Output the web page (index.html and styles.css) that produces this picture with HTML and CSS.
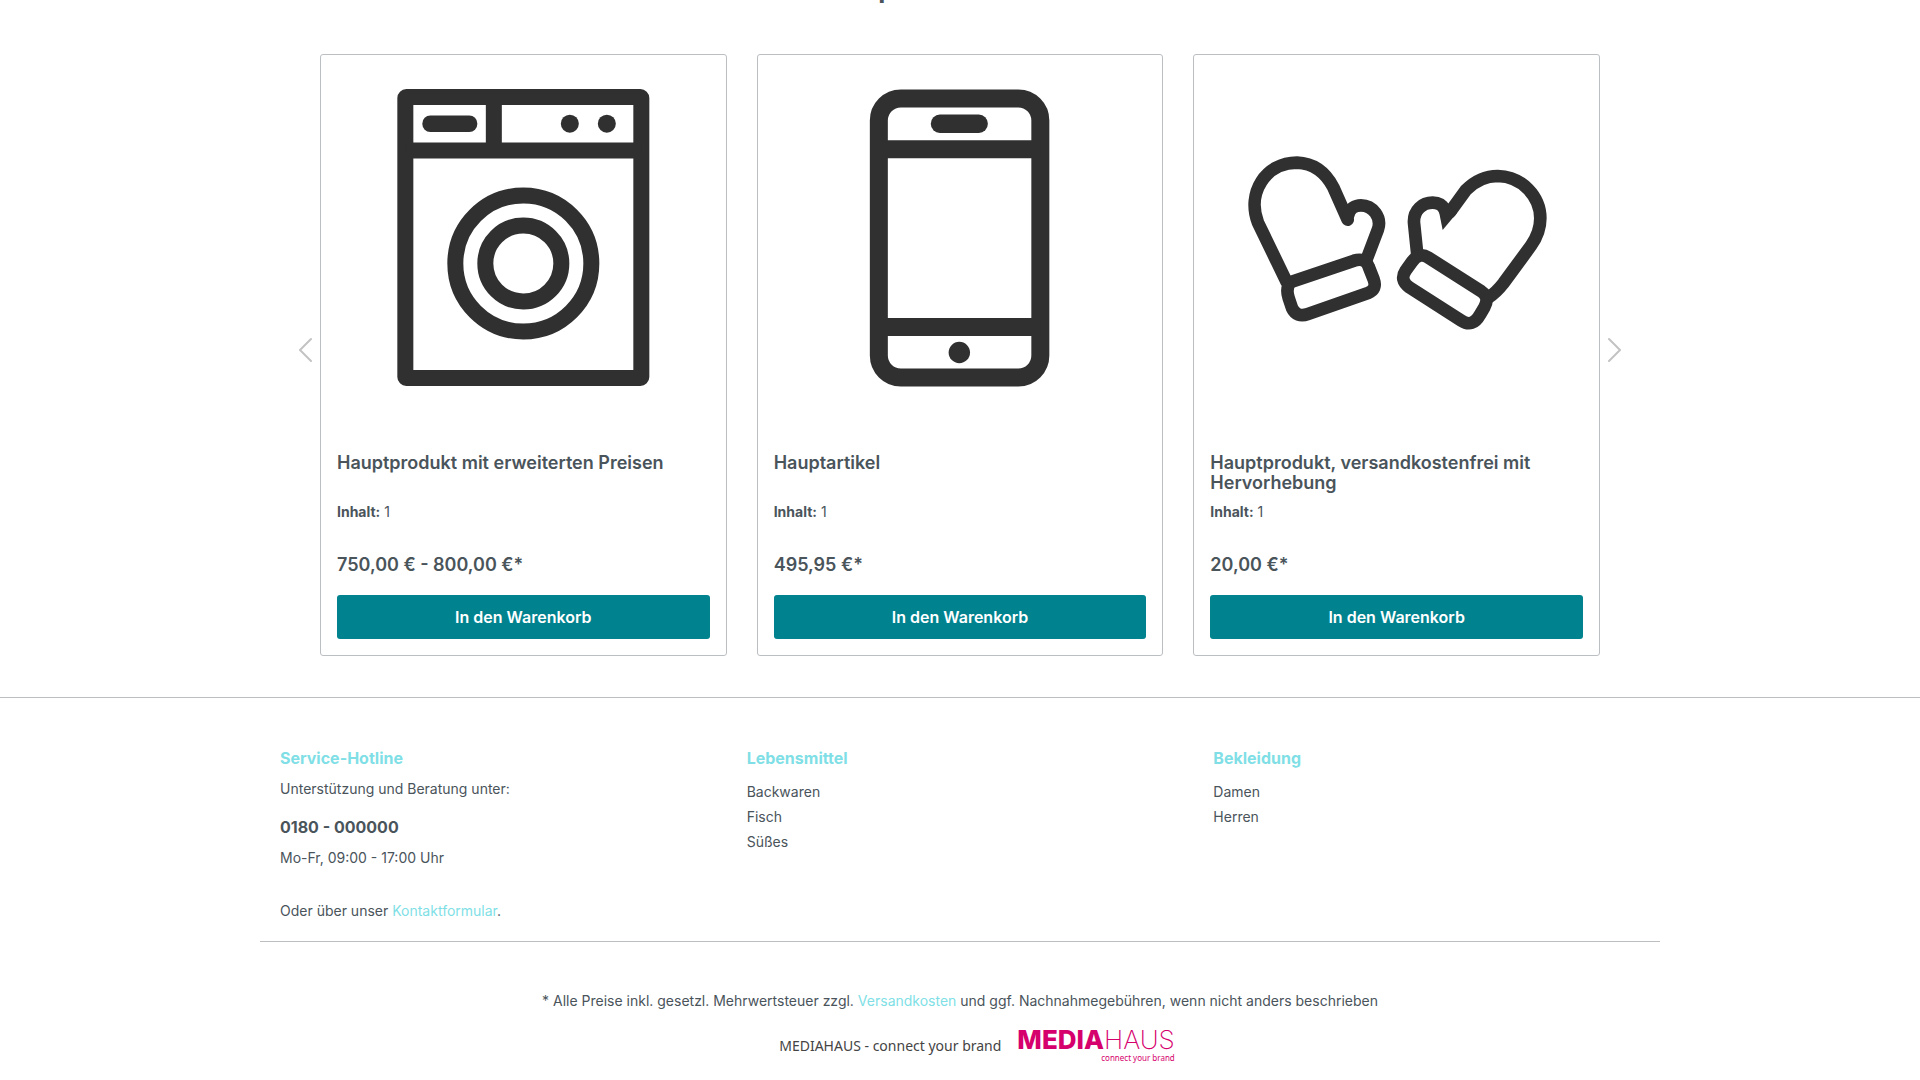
FILE: index.html
```html
<!doctype html>
<html lang="de">
	<head>
		<meta charset="utf-8">
		<title>MEDIAHAUS Shop</title>
		<meta name="viewport" content="width=device-width,initial-scale=1">
		<link rel="stylesheet" href="styles.css">
	</head>
	<body>
		<main class="container">
			<h2 class="slider-title">Empfohlene Artikel</h2>
			<div class="slider">
				<button class="arrow" type="button" aria-label="Zurück">
					<svg width="16" height="26" viewBox="0 0 16 26"><path d="M15 2L4 13l11 11"/></svg>
				</button>
				<div class="products">
					<article class="card">
						<!-- Waschmaschine -->
						<svg class="card-img line" viewBox="0 0 300 300" stroke-width="16">
							<rect x="32" y="10" width="236" height="281" rx="1"/>
							<path d="M32 63.5h236M120.5 10v53"/>
							<rect class="solid" x="49" y="28.5" width="55" height="16.5" rx="8"/>
							<circle class="solid" cx="196.5" cy="36.7" r="9"/>
							<circle class="solid" cx="233.5" cy="36.7" r="9"/>
							<circle cx="150" cy="176.5" r="68"/>
							<circle cx="150" cy="176.5" r="38"/>
						</svg>
						<h3 class="card-name">Hauptprodukt mit erweiterten Preisen</h3>
						<p class="card-unit"><b>Inhalt:</b> 1</p>
						<p class="card-price">750,00 € - 800,00 €*</p>
						<button class="btn" type="button">In den Warenkorb</button>
					</article>
					<article class="card">
						<!-- Smartphone -->
						<svg class="card-img line" viewBox="0 0 300 300" stroke-width="18">
							<rect x="68.5" y="11.5" width="161.5" height="279" rx="22"/>
							<path d="M68 62.3h162M68 240h162"/>
							<rect class="solid" x="120.5" y="27.5" width="57" height="18.5" rx="9"/>
							<circle class="solid" cx="149" cy="265.5" r="10.7"/>
						</svg>
						<h3 class="card-name">Hauptartikel</h3>
						<p class="card-unit"><b>Inhalt:</b> 1</p>
						<p class="card-price">495,95 €*</p>
						<button class="btn" type="button">In den Warenkorb</button>
					</article>
					<article class="card">
						<!-- Handschuhe -->
						<svg class="card-img line" viewBox="201 261 900 900" stroke-width="38" stroke-linecap="round">
							<path d="M322 846L236 668C202 580 258 488 353 488C405 490 440 520 462 562L505 659"/>
							<path d="M507 645C510 626 528 616 545 616C580 616 608 652 596 688L563 775"/>
							<path d="M335 846L524 782Q558 772 568 800L583 838Q594 868 566 879L386 942Q352 954 338 924L328 894Q318 862 335 846Z"/>
							<path d="M714 765L704 668C702 630 730 608 760 608C780 608 790 616 795 628"/>
							<path d="M812 636L860 570C890 540 920 528 955 528C1030 530 1083 590 1083 655C1083 690 1073 712 1055 737L972 850Q950 878 928 892"/>
							<path class="solid" d="M778 630L790 690L832 640L806 610Z"/>
							<path d="M746 772L906 874Q932 892 915 922L902 944Q880 984 846 962L690 862Q660 840 679 812L699 784Q720 756 746 772Z"/>
						</svg>
						<h3 class="card-name">Hauptprodukt, versandkostenfrei mit Hervorhebung</h3>
						<p class="card-unit"><b>Inhalt:</b> 1</p>
						<p class="card-price">20,00 €*</p>
						<button class="btn" type="button">In den Warenkorb</button>
					</article>
				</div>
				<button class="arrow" type="button" aria-label="Weiter">
					<svg width="16" height="26" viewBox="0 0 16 26"><path d="M1 2l11 11L1 24"/></svg>
				</button>
			</div>
		</main>
		<footer class="footer">
			<div class="container">
				<div class="footer-cols">
					<div class="footer-col">
						<h4>Service-Hotline</h4>
						<p>Unterstützung und Beratung unter:</p>
						<p><a class="phone" href="tel:0180000000">0180 - 000000</a></p>
						<p>Mo-Fr, 09:00 - 17:00 Uhr</p>
						<p class="contact">Oder über unser <a href="#">Kontaktformular</a>.</p>
					</div>
					<div class="footer-col">
						<h4>Lebensmittel</h4>
						<ul>
							<li><a href="#">Backwaren</a></li>
							<li><a href="#">Fisch</a></li>
							<li><a href="#">Süßes</a></li>
						</ul>
					</div>
					<div class="footer-col">
						<h4>Bekleidung</h4>
						<ul>
							<li><a href="#">Damen</a></li>
							<li><a href="#">Herren</a></li>
						</ul>
					</div>
				</div>
				<p class="vat">* Alle Preise inkl. gesetzl. Mehrwertsteuer zzgl. <a href="#">Versandkosten</a> und ggf. Nachnahmegebühren, wenn nicht anders beschrieben</p>
				<div class="brand">
					<span>MEDIAHAUS - connect your brand</span>
					<div class="logo">
						<div class="logo-name"><b>MEDIA</b>HAUS</div>
						<div class="logo-claim">connect your brand</div>
					</div>
				</div>
			</div>
		</footer>
	</body>
</html>
```
FILE: styles.css
```css
* {
	margin: 0;
	padding: 0;
	box-sizing: border-box;
}
body {
	background-color: #fff;
	color: #4a545b;
	font: 14px/20px Inter, sans-serif;
	overflow-x: hidden;
}
a {
	color: #80dfe6;
	text-decoration: none;
}
ul {
	list-style: none;
}
.container {
	max-width: 1400px;
	margin: 0 auto;
}

/* Produktslider */
.slider-title {
	margin-top: -27px;
	margin-bottom: 49px;
	font-size: 26px;
	line-height: 32px;
	font-weight: 700;
	text-align: center;
}
.slider {
	display: flex;
	align-items: center;
	gap: 8px;
	padding: 0 36px 41px;
}
.arrow {
	flex: none;
	width: 16px;
	margin-bottom: 10px;
	border: 0;
	background: none;
	cursor: pointer;
}
.arrow svg {
	display: block;
	fill: none;
	stroke: #c3c3c3;
	stroke-width: 2;
	stroke-linecap: round;
	stroke-linejoin: round;
}
.products {
	flex: 1;
	display: grid;
	grid-template-columns: repeat(3, 1fr);
	gap: 30px;
}
.card {
	display: flex;
	flex-direction: column;
	padding: 16px;
	border: 1px solid #bcbfc2;
	border-radius: 3px;
}
.card-img {
	width: 100%;
	height: 300px;
	margin: 16px 0 66px;
}
.line {
	fill: none;
	stroke: #303030;
}
.solid {
	fill: #303030;
	stroke: none;
}
.card-name {
	height: 40px;
	margin-bottom: 9px;
	font-size: 18px;
	line-height: 20px;
	font-weight: 600;
}
.card-unit {
	margin-bottom: 33px;
}
.card-price {
	margin-bottom: 20px;
	font-size: 18px;
	font-weight: 600;
}
.btn {
	height: 44px;
	border: 0;
	border-radius: 3px;
	background-color: #00838f;
	color: #fff;
	font: 600 16px/44px Inter, sans-serif;
	cursor: pointer;
}

/* Footer */
.footer {
	border-top: 1px solid #bcbfc2;
	padding-top: 50px;
}
.footer-cols {
	display: grid;
	grid-template-columns: repeat(3, 1fr);
	padding-bottom: 20px;
	border-bottom: 1px solid #bcbfc2;
}
.footer-col {
	padding: 0 20px;
}
.footer-col h4 {
	margin-bottom: 11px;
	color: #80dfe6;
	font-size: 16px;
	font-weight: 700;
}
.footer-col p {
	margin-bottom: 10px;
}
.footer-col .phone {
	display: inline-block;
	padding-top: 8px;
	color: #4a545b;
	font-size: 16px;
	font-weight: 700;
}
.footer-col .contact {
	margin: 33px 0 0;
}
.footer-col li {
	line-height: 25px;
}
.footer-col li a {
	color: #4a545b;
}
.vat {
	margin-top: 49px;
	text-align: center;
}
.brand {
	display: flex;
	justify-content: center;
	align-items: center;
	gap: 16px;
	margin-top: 17px;
	padding: 0 0 14px 34px;
	color: #444;
	font-family: "Noto Sans", sans-serif;
}
.logo {
	color: #d6006d;
}
.logo-name {
	font: 200 26px/24px Inter, sans-serif;
}
.logo-name b {
	font-weight: 800;
}
.logo-claim {
	font: 8px/12px "Noto Sans", sans-serif;
	text-align: right;
}
```
